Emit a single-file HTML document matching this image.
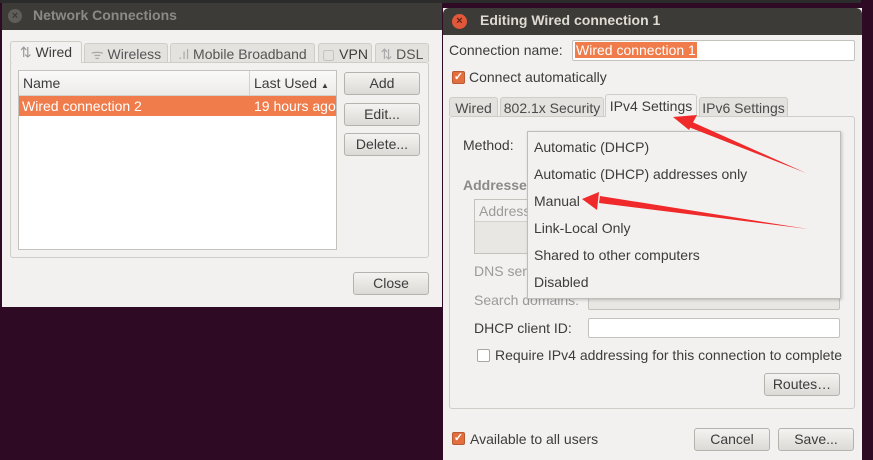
<!DOCTYPE html>
<html><head><meta charset="utf-8"><style>
*{box-sizing:border-box;margin:0;padding:0}
body{width:873px;height:460px;position:relative;overflow:hidden;background:#2f0a24;font-family:"Liberation Sans",sans-serif;font-size:14px;color:#3c3c3c}
.a{position:absolute;white-space:nowrap}
.btn{position:absolute;border:1px solid #b5b3ae;border-radius:3px;background:linear-gradient(#f4f3f1,#dcdad6);text-align:center;line-height:21px;color:#3c3c3c}
.cb{position:absolute;width:13px;height:13px;border-radius:2px;color:#fff;font-size:11px;line-height:11px;text-align:center;font-weight:bold}
.on{background:#e46f3e;border:1px solid #b85a33}
.off{background:#fff;border:1px solid #a9a7a3}
.inp{position:absolute;background:#fff;border:1px solid #c4c2bd;border-radius:2px}
.tab{position:absolute;border:1px solid #cfcdc8;border-bottom:none;border-radius:3px 3px 0 0;background:#e4e2de;line-height:20px;text-align:center;color:#4a4a4a}
</style></head><body>
<div class="a" style="left:0;top:0;width:873px;height:3px;background:#2b2b2b"></div>
<!-- left window -->
<div class="a" style="left:2px;top:3px;width:440px;height:304px;background:#f2f1ef"></div>
<div class="a" style="left:2px;top:3px;width:440px;height:27px;background:#3c3b37"></div>
<div class="a" style="left:8px;top:9px;width:14px;height:14px;border-radius:7px;background:#5f5e59;color:#3c3b37;font-size:11px;line-height:14px;text-align:center;font-weight:bold">×</div>
<div class="a" style="left:33px;top:7px;color:#8b8a85;font-weight:bold;font-size:14px">Network Connections</div>
<div class="a" style="left:10px;top:62px;width:419px;height:196px;border:1px solid #cfcdc8;border-radius:3px"></div>
<div class="tab" style="left:10px;top:41px;width:72px;height:22px;background:#f2f1ef;color:#3c3c3c"><span style="color:#999">⇅</span> Wired</div>
<div class="tab" style="left:84px;top:43px;width:84px;height:19px;color:#555"><span style="color:#aaa">ᯤ</span> Wireless</div>
<div class="tab" style="left:170px;top:43px;width:145px;height:19px;color:#555"><span style="color:#aaa">.ıl</span> Mobile Broadband</div>
<div class="tab" style="left:318px;top:43px;width:54px;height:19px;color:#3c3c3c"><span style="color:#bbb">▢</span> VPN</div>
<div class="tab" style="left:375px;top:43px;width:54px;height:19px;color:#555"><span style="color:#aaa">⇅</span> DSL</div>
<div class="a" style="left:18px;top:70px;width:319px;height:180px;background:#fff;border:1px solid #c4c2bd"></div>
<div class="a" style="left:19px;top:71px;width:317px;height:25px;background:linear-gradient(#fafafa,#ecebe8);border-bottom:1px solid #d3d1cc"></div>
<div class="a" style="left:249px;top:71px;width:1px;height:25px;background:#d3d1cc"></div>
<div class="a" style="left:23px;top:75px">Name</div>
<div class="a" style="left:254px;top:75px">Last Used <span style="font-size:8px">▲</span></div>
<div class="a" style="left:19px;top:96px;width:317px;height:20px;background:#ef7c4a"></div>
<div class="a" style="left:22px;top:98px;color:#fff">Wired connection 2</div>
<div class="a" style="left:254px;top:98px;color:#fff">19 hours ago</div>
<div class="btn" style="left:344px;top:72px;width:76px;height:23px">Add</div>
<div class="btn" style="left:344px;top:103px;width:76px;height:23px">Edit...</div>
<div class="btn" style="left:344px;top:133px;width:76px;height:23px">Delete...</div>
<div class="btn" style="left:353px;top:272px;width:76px;height:23px">Close</div>
<!-- right window -->
<div class="a" style="left:861px;top:0;width:12px;height:460px;background:#2f0a24"></div>
<div class="a" style="left:443px;top:8px;width:419px;height:452px;background:#f2f1ef"></div>
<div class="a" style="left:443px;top:8px;width:419px;height:27px;background:#3c3b37;border-radius:6px 6px 0 0"></div>
<div class="a" style="left:452px;top:14px;width:15px;height:15px;border-radius:8px;background:#e0573a;color:#5a2212;font-size:11px;line-height:15px;text-align:center;font-weight:bold">×</div>
<div class="a" style="left:480px;top:12px;color:#dfdbd2;font-weight:bold;font-size:14px">Editing Wired connection 1</div>
<div class="a" style="left:449px;top:42px">Connection name:</div>
<div class="inp" style="left:572px;top:40px;width:283px;height:21px"></div>
<div class="a" style="left:575px;top:42px;background:#ef7c4a;color:#fff;padding:0 1px">Wired connection 1</div>
<div class="cb on" style="left:452px;top:71px">✓</div>
<div class="a" style="left:469px;top:69px">Connect automatically</div>
<div class="a" style="left:449px;top:116px;width:406px;height:293px;border:1px solid #cfcdc8;border-radius:3px"></div>
<div class="tab" style="left:449px;top:97px;width:49px;height:19px">Wired</div>
<div class="tab" style="left:500px;top:97px;width:104px;height:19px">802.1x Security</div>
<div class="tab" style="left:605px;top:94px;width:92px;height:23px;background:#f2f1ef;line-height:23px;color:#3c3c3c">IPv4 Settings</div>
<div class="tab" style="left:699px;top:97px;width:89px;height:19px">IPv6 Settings</div>
<div class="a" style="left:463px;top:137px">Method:</div>
<div class="a" style="left:463px;top:177px;color:#8a8a8a;font-weight:bold">Addresses</div>
<div class="a" style="left:474px;top:199px;width:80px;height:55px;border:1px solid #c4c2bd;background:#e8e7e4"></div>
<div class="a" style="left:475px;top:200px;width:79px;height:22px;background:#f2f1ef;border-bottom:1px solid #d3d1cc"></div>
<div class="a" style="left:479px;top:203px;color:#9a9a9a">Address</div>
<div class="a" style="left:474px;top:263px;color:#9a9a9a">DNS serv</div>
<div class="a" style="left:474px;top:292px;color:#9a9a9a">Search domains:</div>
<div class="inp" style="left:588px;top:292px;width:252px;height:18px;background:#e8e7e4"></div>
<div class="a" style="left:474px;top:320px">DHCP client ID:</div>
<div class="inp" style="left:588px;top:318px;width:252px;height:20px"></div>
<div class="cb off" style="left:477px;top:349px"></div>
<div class="a" style="left:495px;top:347px">Require IPv4 addressing for this connection to complete</div>
<div class="btn" style="left:764px;top:373px;width:76px;height:23px">Routes…</div>
<div class="cb on" style="left:452px;top:432px">✓</div>
<div class="a" style="left:470px;top:431px">Available to all users</div>
<div class="btn" style="left:694px;top:428px;width:76px;height:23px">Cancel</div>
<div class="btn" style="left:778px;top:428px;width:76px;height:23px">Save...</div>
<!-- dropdown -->
<div class="a" style="left:527px;top:131px;width:314px;height:168px;background:#f2f1ef;border:1px solid #bfbdb8;box-shadow:1px 1px 3px rgba(0,0,0,.2)"></div>
<div class="a" style="left:534px;top:139px">Automatic (DHCP)</div>
<div class="a" style="left:534px;top:166px">Automatic (DHCP) addresses only</div>
<div class="a" style="left:534px;top:193px">Manual</div>
<div class="a" style="left:534px;top:220px">Link-Local Only</div>
<div class="a" style="left:534px;top:247px">Shared to other computers</div>
<div class="a" style="left:534px;top:274px">Disabled</div>
<svg class="a" style="left:0;top:0" width="873" height="460">
<polygon points="806,173 690,121 686,126" fill="#f02a2a"/>
<polygon points="673,117 697,115 689,130" fill="#f02a2a"/>
<polygon points="808,229 600,196 599,203" fill="#f02a2a"/>
<polygon points="582,199 599,192 597,210" fill="#f02a2a"/>
</svg>
</body></html>
